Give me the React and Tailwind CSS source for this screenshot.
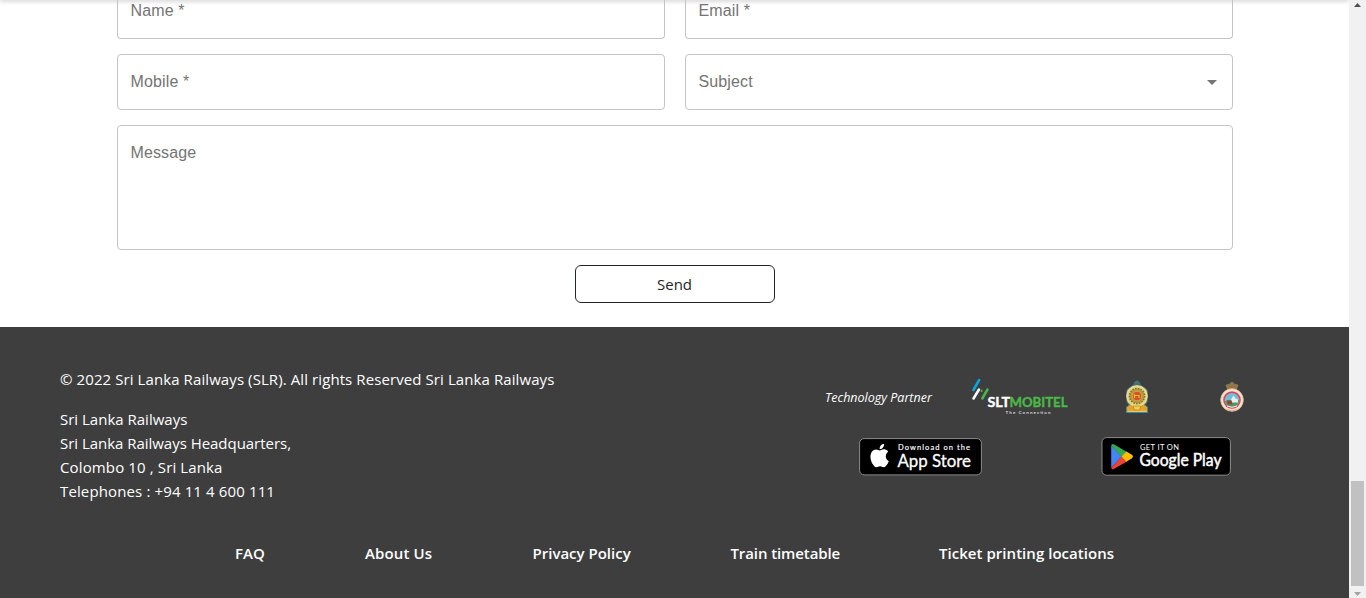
import React from "react";

const ui = "font-['Open_Sans','Noto_Sans',sans-serif]";

function Field({ label, className = "", children }) {
  return (
    <div
      className={`flex justify-between rounded-[4px] border border-[#c4c4c4] pl-[13px] pr-2 font-['Liberation_Sans',sans-serif] text-base tracking-[0.13px] text-[#747474] ${className}`}
    >
      <span>{label}</span>
      {children}
    </div>
  );
}

function SltMobitel() {
  return (
    <svg width="98" height="38" viewBox="0 0 98 38" className="shrink-0">
      <g strokeWidth="2.5" strokeLinecap="round" fill="none">
        <path d="M8.2 2 2.4 12" stroke="#0aa5df" />
        <path d="M8 11.5 2.5 20.5" stroke="#fff" />
        <path d="M16.5 11.5 11.3 20.5" stroke="#4bb748" />
        <path d="M10.6 12.5v.8" stroke="#4bb748" strokeWidth="1.8" />
      </g>
      <g fontFamily="Lato, sans-serif" fontWeight="700">
        <text x="16.5" y="29" fontSize="13.5" fill="#fff" stroke="#fff" strokeWidth=".4" textLength="22.5" lengthAdjust="spacingAndGlyphs">SLT</text>
        <text x="38.5" y="29" fontSize="13.5" fill="#4bb748" stroke="#4bb748" strokeWidth=".4" textLength="58" lengthAdjust="spacingAndGlyphs">MOBITEL</text>
        <text x="34.5" y="35.5" fontSize="4.5" fill="#d8d8d8" textLength="45">The Connection</text>
      </g>
    </svg>
  );
}

function Emblem() {
  return (
    <svg width="24" height="34" viewBox="0 0 24 34" className="shrink-0">
      <path d="M8.5 7 9.5 2.5 12 .8 14.5 2.5 15.5 7Z" fill="#556b5c" stroke="#2c809c" />
      <path d="M1.5 32.5V27l3-2-2.5-3V10l5-4h10l5 4v12l-2.5 3 3 2v5.5Z" fill="#d9a832" stroke="#3c8aa0" />
      <circle cx="12" cy="16" r="10.3" fill="#edcf76" stroke="#f4e3a4" />
      <circle cx="12" cy="16" r="7.6" fill="#b39a44" stroke="#6f7340" strokeWidth="1.4" strokeDasharray="1.6 1.2" />
      <circle cx="12" cy="16" r="4.8" fill="#d4532b" stroke="#d9a832" />
      <path d="M9.5 18v-2.500l-.6-1.400M9.500 15.500h4.500v2.500" fill="none" stroke="#f4bb32" strokeWidth="1.2" />
      <circle cx="4.5" cy="28.5" r="2" fill="#ef9f1b" />
      <circle cx="19.5" cy="28.5" r="2" fill="#ef9f1b" />
      <path d="M8 26h8l-1.500 4h-5Z" fill="#f2cf4a" stroke="#b67d20" strokeWidth=".7" />
      <path d="M2.5 31.4h19" stroke="#e9c463" strokeWidth="1.2" />
    </svg>
  );
}

function RailwayCrest() {
  return (
    <svg width="26" height="34" viewBox="0 0 26 34" className="shrink-0">
      <path d="M7 5 10 4.500l3-2.500 3 2.500L19 5 17.500 9h-9Z" fill="#8a7a4c" stroke="#9c8355" strokeWidth=".7" />
      <path d="M10 6.500h6" stroke="#b0643f" strokeWidth="1.2" />
      <circle cx="13" cy="20" r="11.3" fill="#f8e3cd" stroke="#dfc29f" strokeWidth=".8" />
      <circle cx="13" cy="20" r="8.8" fill="#e5405f" />
      <circle cx="13" cy="20.4" r="7.3" fill="#6fc0d6" />
      <path d="M5.800 21.400q3.500-2 7.200-1t7.200-1a7.300 7.300 0 0 1-14.400 2Z" fill="#4a9c63" />
      <path d="m12 19.400 2.500-4 2 3 2.500 1v3h-6Z" fill="#e8eef0" />
      <path d="M8 20.400h4.500l1 4H8.500Z" fill="#8e4536" />
      <path d="M8 26q5 2.500 10 0" fill="none" stroke="#eef0e8" strokeWidth="1" />
      <path d="M6.500 29.400q6.500 3 13 0" fill="none" stroke="#d6a377" strokeWidth=".8" />
    </svg>
  );
}

function AppStoreBadge() {
  return (
    <svg width="123" height="38" viewBox="0 0 123 38" className="mt-px shrink-0">
      <rect x=".6" y=".6" width="121.8" height="36.3" rx="4.5" fill="#000" stroke="#8b8b8b" />
      <path
        transform="translate(7.1 3.3) scale(1.13 1.18)"
        fill="#fff"
        d="M18.71 19.5c-.83 1.24-1.71 2.45-3.05 2.47-1.34.03-1.77-.79-3.29-.79-1.53 0-2 .77-3.27.82-1.31.05-2.3-1.32-3.14-2.53C4.25 17 2.94 12.45 4.7 9.39c.87-1.52 2.43-2.48 4.12-2.51 1.28-.02 2.5.87 3.29.87.78 0 2.26-1.07 3.81-.91.65.03 2.47.26 3.64 1.98-.09.06-2.17 1.28-2.15 3.81.03 3.02 2.65 4.03 2.68 4.04-.03.07-.42 1.44-1.38 2.83M13 3.5c.73-.83 1.94-1.46 2.94-1.5.13 1.17-.34 2.35-1.04 3.19-.69.85-1.83 1.51-2.95 1.42-.15-1.15.41-2.35 1.05-3.11Z"
      />
      <g fill="#fff" fontFamily="Lato, sans-serif">
        <text x="39" y="12" fontSize="7.5" stroke="#fff" strokeWidth=".15" textLength="72">Download on the</text>
        <text x="38.5" y="29.2" fontSize="17.5" stroke="#fff" strokeWidth=".3" textLength="73.5" lengthAdjust="spacingAndGlyphs">App Store</text>
      </g>
    </svg>
  );
}

function GooglePlayBadge() {
  return (
    <svg width="130" height="39" viewBox="0 0 130 39" className="shrink-0">
      <rect x="1" y=".6" width="128.4" height="37.6" rx="4.5" fill="#000" stroke="#8b8b8b" />
      <path d="M10.2 8.5v22.2l10.6-11.1Z" fill="#4285f4" />
      <path d="M10.2 8.5q.8-2.3 3-1L26 14.9l-5.4 5Z" fill="#34a853" />
      <path d="M10.2 30.7q.8 2.4 3 1L26 24.4l-5.2-5.2Z" fill="#ea4335" />
      <path d="m25.4 14.5 5.5 3.3q2.2 1.6 0 3.5l-5.5 3.4-4.9-5.1Z" fill="#fbbc04" />
      <g fill="#fff" fontFamily="Lato, sans-serif">
        <text x="39" y="12.5" fontSize="7.5" textLength="39">GET IT ON</text>
        <text x="38.5" y="29.3" fontSize="17" stroke="#fff" strokeWidth=".5" textLength="82" lengthAdjust="spacingAndGlyphs">Google Play</text>
      </g>
    </svg>
  );
}

export default function App() {
  return (
    <div className="flex h-[598px] w-[1366px] overflow-hidden bg-white">
      <div className="flex w-[1349px] flex-col">
        <div className="-mt-1 h-1 shrink-0 shadow-[0_1px_5px_rgba(0,0,0,0.22)]" />
        <main className="flex h-[327px] shrink-0 flex-col items-center">
          <div className="grid w-[1116px] grid-cols-2 gap-x-5 gap-y-[15px]">
            <Field label="Name *" className="h-[39px] rounded-t-none border-t-0 leading-[21px]" />
            <Field label="Email *" className="h-[39px] rounded-t-none border-t-0 leading-[21px]" />
            <Field label="Mobile *" className="h-14 pt-[15px] leading-[23px]" />
            <Field label="Subject" className="h-14 pt-[15px] leading-[23px]">
              <svg width="24" height="24" viewBox="0 0 24 24" fill="#757575">
                <path d="m7 10 5 5 5-5z" />
              </svg>
            </Field>
            <Field label="Message" className="col-span-2 h-[125px] pt-[15px] leading-[23px]" />
          </div>
          <button className={`mt-[15px] h-[38px] w-[200px] rounded-[6px] border border-[#212529] pt-px text-[15px] text-[#212529] ${ui}`}>
            Send
          </button>
        </main>
        <footer className={`flex grow flex-col bg-[#3e3e3e] text-[15px] leading-6 text-white ${ui}`}>
          <div className="flex h-[214px] justify-between pl-[60px]">
            <div className="whitespace-nowrap pt-10">
              <p className="tracking-[0.09px]">© 2022 Sri Lanka Railways (SLR). All rights Reserved Sri Lanka Railways</p>
              <p className="mt-4">Sri Lanka Railways</p>
              <p className="tracking-[-0.03px]">Sri Lanka Railways Headquarters,</p>
              <p className="tracking-[0.13px]">Colombo 10 , Sri Lanka</p>
              <p className="tracking-[0.13px]">Telephones : +94 11 4 600 111</p>
            </div>
            <div className="w-[524px] pt-[51px]">
              <div className="flex h-[38px] items-center">
                <span className="w-[146px] whitespace-nowrap pt-0.5 text-[12.5px] italic">Technology Partner</span>
                <SltMobitel />
                <div className="ml-14 flex gap-[70px]">
                  <Emblem />
                  <RailwayCrest />
                </div>
              </div>
              <div className="mt-[21px] flex items-start gap-[119px] pl-[34px]">
                <AppStoreBadge />
                <GooglePlayBadge />
              </div>
            </div>
          </div>
          <nav className="flex whitespace-nowrap pl-[235px] font-semibold">
            <a className="w-[130px]">FAQ</a>
            <a className="w-[167.5px] tracking-[0.12px]">About Us</a>
            <a className="w-[198px]">Privacy Policy</a>
            <a className="w-[208.5px] tracking-[-0.1px]">Train timetable</a>
            <a className="tracking-[0.04px]">Ticket printing locations</a>
          </nav>
        </footer>
      </div>
      <div className="flex w-[17px] flex-col items-center justify-between bg-[#f1f1f1]">
        <svg width="17" height="17" viewBox="0 0 17 17">
          <path d="M5 7h7L8.5 3z" fill="#505050" />
        </svg>
        <div className="flex flex-col items-center">
          <div className="h-[105px] w-[13px] bg-[#c1c1c1]" />
          <svg width="17" height="12" viewBox="0 0 17 12">
            <path d="M5 6h7l-3.5 4z" fill="#a3a3a3" />
          </svg>
        </div>
      </div>
    </div>
  );
}
